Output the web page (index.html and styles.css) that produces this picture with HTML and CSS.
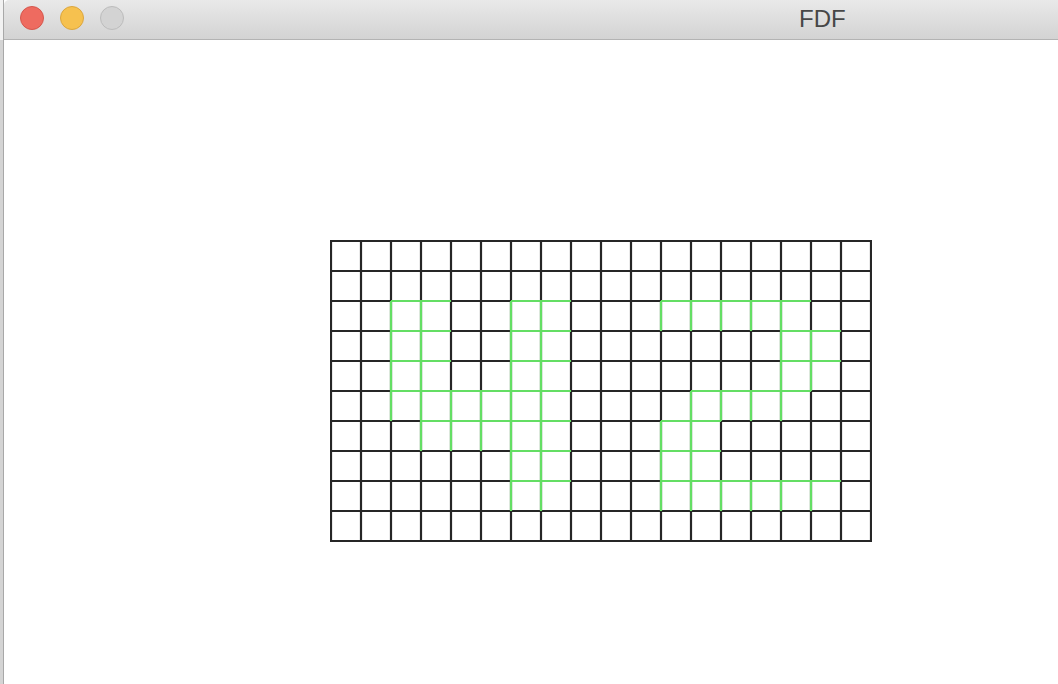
FILE: index.html
```html
<!DOCTYPE html>
<html lang="en">
<head>
<meta charset="utf-8">
<title>FDF</title>
<link rel="stylesheet" href="styles.css">
</head>
<body>
<div class="screen">
  <div class="edge"></div>
  <div class="window">
    <div class="titlebar">
      <div class="lights">
        <span class="light close"></span>
        <span class="light minimize"></span>
        <span class="light zoom"></span>
      </div>
      <span class="title">FDF</span>
    </div>
    <div class="content">
      <svg class="mesh" width="542" height="302" viewBox="0 0 542 302" xmlns="http://www.w3.org/2000/svg">
        <path class="grid" d="M1 1V301M31 1V301M61 1V301M91 1V301M121 1V301M151 1V301M181 1V301M211 1V301M241 1V301M271 1V301M301 1V301M331 1V301M361 1V301M391 1V301M421 1V301M451 1V301M481 1V301M511 1V301M541 1V301M1 1H541M1 31H541M1 61H541M1 91H541M1 121H541M1 151H541M1 181H541M1 211H541M1 241H541M1 271H541M1 301H541"/>
        <path class="high" d="M61 61H121M181 61H241M331 61H481M61 91H121M181 91H241M451 91H511M61 121H121M181 121H241M451 121H511M61 151H241M361 151H481M91 181H241M331 181H391M181 211H241M331 211H391M181 241H241M331 241H511M61 61V181M91 61V211M121 151V211M151 151V211M181 61V271M211 61V271M331 61V91M331 181V271M361 61V91M361 151V271M391 61V91M391 151V181M391 241V271M421 61V91M421 151V181M421 241V271M451 61V181M451 241V271M481 91V151M481 241V271"/>
      </svg>
    </div>
  </div>
</div>
</body>
</html>
```

FILE: styles.css
```css
html, body {
  margin: 0;
  padding: 0;
  height: 100%;
  overflow: hidden;
  background: #ffffff;
}

.screen {
  display: flex;
  height: 684px;
  width: 1058px;
}

.edge {
  width: 3px;
  flex: none;
  background: linear-gradient(to bottom, #f2f2f2 0, #f2f2f2 40px, #d4d4d4 40px, #d4d4d4 100%);
}

.window {
  flex: 1;
  display: flex;
  flex-direction: column;
  border-left: 1px solid #a8a8a8;
  background: #ffffff;
}

.titlebar {
  height: 39px;
  flex: none;
  display: flex;
  align-items: center;
  background: linear-gradient(to bottom, #e9e9e9, #d3d3d3);
  border-bottom: 1px solid #b3b3b3;
  border-top-left-radius: 5px;
}

.lights {
  display: flex;
  gap: 16px;
  margin-left: 16px;
  margin-top: -3px;
}

.light {
  width: 22px;
  height: 22px;
  border-radius: 50%;
  box-sizing: content-box;
}

.close {
  background: #ee6b60;
  border: 1px solid #d5574d;
}

.minimize {
  background: #f6c14f;
  border: 1px solid #dba63f;
}

.zoom {
  background: #d3d3d3;
  border: 1px solid #bcbcbc;
}

.title {
  margin-left: 675px;
  margin-top: -2px;
  font-family: "Liberation Sans", Arial, sans-serif;
  font-size: 24px;
  color: #474747;
  line-height: 1;
}

.content {
  flex: 1;
  padding: 200px 0 0 326px;
}

.mesh {
  display: block;
}

.grid {
  fill: none;
  stroke: #262626;
  stroke-width: 2.2;
  stroke-linecap: square;
}

.high {
  fill: none;
  stroke: #64de64;
  stroke-width: 2.2;
}
```
